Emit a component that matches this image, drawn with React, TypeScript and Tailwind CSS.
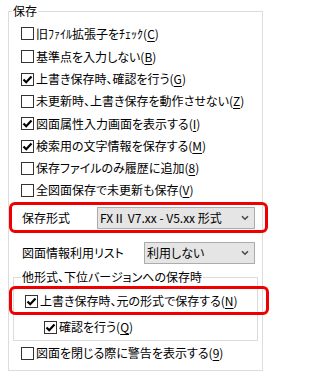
import React from "react";

function Box({ checked }: { checked?: boolean }) {
  return (
    <span className="flex h-[13px] w-[13px] shrink-0 items-center justify-center border border-[#333333] bg-white">
      {checked && (
        <svg width="11" height="11" viewBox="0 0 11 11">
          <path d="M1.5 5.5 L4.2 8.2 L9.5 2.5" fill="none" stroke="#000" strokeWidth="2.2" />
        </svg>
      )}
    </span>
  );
}

function Check({
  label,
  k,
  checked,
  className,
}: {
  label: string;
  k: string;
  checked?: boolean;
  className: string;
}) {
  return (
    <div className={`flex items-center gap-[2px] ${className}`}>
      <Box checked={checked} />
      <span className="whitespace-nowrap">
        {label}(<span className="underline underline-offset-2">{k}</span>)
      </span>
    </div>
  );
}

function Combo({ text, width }: { text: string; width: string }) {
  return (
    <div
      className={`flex h-[22px] items-center justify-between border border-[#acacac] bg-[#e5e5e5] pl-[2px] pr-[5px] ${width}`}
    >
      <span className="whitespace-nowrap">{text}</span>
      <svg width="8" height="6" viewBox="0 0 8 6">
        <path d="M1 1.2 L4 4.2 L7 1.2" fill="none" stroke="#4a4a4a" strokeWidth="1.6" />
      </svg>
    </div>
  );
}

export default function App() {
  return (
    <div className="relative h-[376px] w-[269px] overflow-hidden bg-white text-[12px] text-black [font-family:'Noto_Sans_CJK_JP','Noto_Sans',sans-serif] [font-feature-settings:'palt']">
      <fieldset className="ml-[8px] mt-[4px] h-[367px] w-[255px] border border-[#dcdcdc]">
        <legend className="ml-[3px] px-[1px] leading-[14px]">保存</legend>
        <div className="flex flex-col pt-[4px] pl-[12px] leading-[14px]">
          <Check className="h-[23px]" label="旧ﾌｧｲﾙ拡張子をﾁｪｯｸ" k="C" />
          <Check className="h-[23px]" label="基準点を入力しない" k="B" />
          <Check className="h-[22px]" label="上書き保存時、確認を行う" k="G" checked />
          <Check className="h-[22px]" label="未更新時、上書き保存を動作させない" k="Z" />
          <Check className="h-[23px]" label="図面属性入力画面を表示する" k="I" checked />
          <Check className="h-[22px]" label="検索用の文字情報を保存する" k="M" checked />
          <Check className="h-[22px]" label="保存ファイルのみ履歴に追加" k="8" />
          <Check className="h-[22px]" label="全図面保存で未更新も保存" k="V" />
        </div>

        <div className="relative mt-[6px] flex h-[22px] items-center pl-[13px]">
          <span className="w-[75px]">保存形式</span>
          <Combo text="FXⅡ V7.xx - V5.xx 形式" width="w-[158px]" />
          <div className="absolute -bottom-[4px] -right-[6px] -top-[5px] left-0 rounded-[6px] border-[3px] border-[#ee0000]" />
        </div>

        <div className="mt-[13px] flex h-[22px] items-center pl-[13px]">
          <span className="w-[122px]">図面情報利用リスト</span>
          <Combo text="利用しない" width="w-[111px]" />
        </div>

        <fieldset className="ml-[4px] mt-[6px] h-[71px] w-[245px] border border-[#dcdcdc]">
          <legend className="ml-[7px] px-[1px] leading-[14px]">他形式、下位バージョンへの保存時</legend>
          <div className="relative mt-[6px] pl-[11px]">
            <Check className="h-[22px]" label="上書き保存時、元の形式で保存する" k="N" checked />
            <div className="absolute -bottom-[3px] -left-[5px] -right-[12px] -top-[4px] rounded-[6px] border-[3px] border-[#ee0000]" />
          </div>
          <div className="mt-[4px] pl-[30px]">
            <Check className="h-[22px]" label="確認を行う" k="Q" checked />
          </div>
        </fieldset>

        <div className="mt-[1px] pl-[12px]">
          <Check className="h-[22px]" label="図面を閉じる際に警告を表示する" k="9" />
        </div>
      </fieldset>
    </div>
  );
}
